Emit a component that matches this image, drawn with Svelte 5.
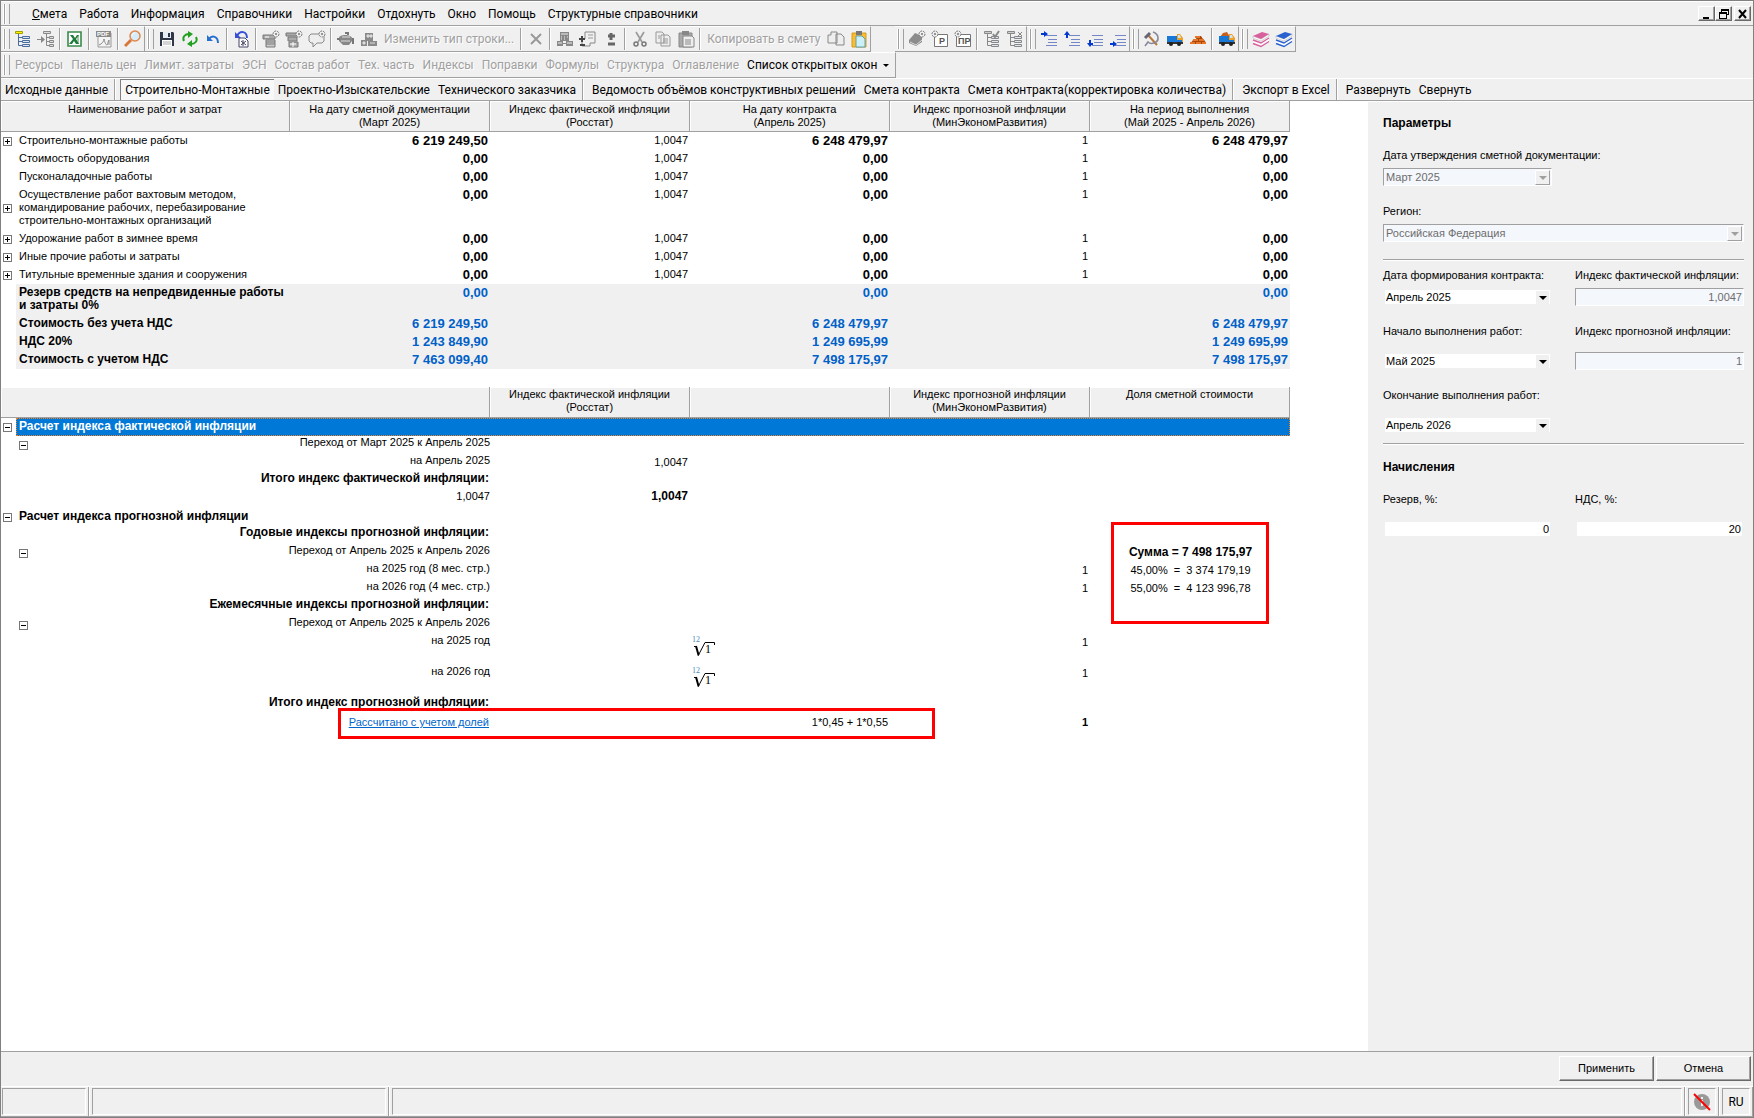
<script>
  const menu = ["Работа", "Информация", "Справочники", "Настройки", "Отдохнуть", "Окно", "Помощь", "Структурные справочники"];

  const toolbars = [
    ["tree", "treeIn", "|", "excel", "|", "pdf", "|", "search"],
    ["save", "refresh", "undo", "|", "restore", "|", "rowTop", "rowBottom", "comment", "|", "pot", "boxes", "Изменить тип строки...", "|",
      "cross", "|", "calc", "docPlus", "plusMinus", "|", "cut", "copy", "paste", "|", "Копировать в смету", "pages", "pasteColor"],
    ["book", "docP", "docPR", "|", "treeCheck", "treeCross"],
    ["lineIn", "lineUp", "lineDown", "lineOut"],
    ["hammer", "truck", "bricks", "|", "truckLoad"],
    ["bookPink", "bookBlue"]
  ];

  const panels = ["Ресурсы", "Панель цен", "Лимит. затраты", "ЭСН", "Состав работ", "Тех. часть", "Индексы", "Поправки", "Формулы", "Структура", "Оглавление"];

  const tabs = [
    ["Исходные данные"],
    ["Строительно-Монтажные", "Проектно-Изыскательские", "Технического заказчика"],
    ["Ведомость объёмов конструктивных решений", "Смета контракта", "Смета контракта(корректировка количества)"],
    ["Экспорт в Excel"],
    ["Развернуть", "Свернуть"]
  ];

  let active = "Строительно-Монтажные";

  const costs = [
    { name: "Строительно-монтажные работы", open: true, a: "6 219 249,50", i: "1,0047", b: "6 248 479,97", c: "6 248 479,97" },
    { name: "Стоимость оборудования", a: "0,00", i: "1,0047", b: "0,00", c: "0,00" },
    { name: "Пусконаладочные работы", a: "0,00", i: "1,0047", b: "0,00", c: "0,00" },
    { name: "Осуществление работ вахтовым методом,\nкомандирование рабочих, перебазирование\nстроительно-монтажных организаций", open: true, a: "0,00", i: "1,0047", b: "0,00", c: "0,00" },
    { name: "Удорожание работ в зимнее время", open: true, a: "0,00", i: "1,0047", b: "0,00", c: "0,00" },
    { name: "Иные прочие работы и затраты", open: true, a: "0,00", i: "1,0047", b: "0,00", c: "0,00" },
    { name: "Титульные временные здания и сооружения", open: true, a: "0,00", i: "1,0047", b: "0,00", c: "0,00" }
  ];

  const totals = [
    { name: "Резерв средств на непредвиденные работы\nи затраты 0%", a: "0,00", b: "0,00", c: "0,00" },
    { name: "Стоимость без учета НДС", a: "6 219 249,50", b: "6 248 479,97", c: "6 248 479,97" },
    { name: "НДС 20%", a: "1 243 849,90", b: "1 249 695,99", c: "1 249 695,99" },
    { name: "Стоимость с учетом НДС", a: "7 463 099,40", b: "7 498 175,97", c: "7 498 175,97" }
  ];

  const indexes = [
    { kind: "group selected", name: "Расчет индекса фактической инфляции" },
    { sub: true, name: "Переход от Март 2025 к Апрель 2025" },
    { name: "на Апрель 2025", fact: "1,0047" },
    { kind: "title", name: "Итого индекс фактической инфляции:" },
    { kind: "total", name: "1,0047", fact: "1,0047" },
    { kind: "group", name: "Расчет индекса прогнозной инфляции" },
    { kind: "title", name: "Годовые индексы прогнозной инфляции:" },
    { sub: true, name: "Переход от Апрель 2025 к Апрель 2026", share: "Сумма = 7 498 175,97", strong: true },
    { name: "на 2025 год (8 мес. стр.)", prog: "1", share: "45,00%  =  3 374 179,19" },
    { name: "на 2026 год (4 мес. стр.)", prog: "1", share: "55,00%  =  4 123 996,78" },
    { kind: "title", name: "Ежемесячные индексы прогнозной инфляции:" },
    { sub: true, name: "Переход от Апрель 2025 к Апрель 2026" },
    { kind: "tall", name: "на 2025 год", root: true, prog: "1" },
    { kind: "tall", name: "на 2026 год", root: true, prog: "1" },
    { kind: "title", name: "Итого индекс прогнозной инфляции:" },
    { kind: "result", link: "Рассчитано с учетом долей", formula: "1*0,45 + 1*0,55", prog: "1" }
  ];

  const tree = (c, y) => `<path d="M4.5 4v11.5H8M4.5 7.5H8M4.5 11.5H8" fill="none" stroke="${c}"/><path d="M8.5 6.5h7v2h-7zM8.5 10.5h7v2h-7zM8.5 14.5h7v2h-7z" fill="#dbe6f4" stroke="${c}"/><path d="M1.500 1.500h7v2h-7z" fill="${y}" stroke="#a0a000"/>`;
  const gear = `<circle cx="14" cy="4" r="3" fill="#eee" stroke="#777" stroke-dasharray="2 1"/><circle cx="14" cy="4" r="1" fill="#777"/>`;
  const lines = `<path d="M6 5.500h11M8 9.500h9M8 12.500h9M6 15.500h11" stroke="#7486c8" fill="none"/>`;
  const truck = `<path d="M1 6h10v2h6v5H1z" fill="#1878d8"/><path d="M11 4h3l3 4v2h-6z" fill="#f0a020"/><path d="M12 5h2l1 3h-3z" fill="#cfe4f8"/><path d="M1 12h16v2H1z" fill="#333"/><circle cx="5" cy="14" r="2" fill="#222"/><circle cx="13" cy="14" r="2" fill="#222"/><path d="M16 10h1v2h-1z" fill="#f0a020"/>`;
  const books = (c) => `<path d="M1 10v3l8 3 8-5V8l-8 5z" fill="#fff"/><path d="M1 13.500l8 3 8-5M1 10l8 3 8-5" fill="none" stroke="${c}" stroke-width="1.400"/><path d="M1 6v2l8 3 8-5V4L9 9z" fill="#fff" stroke="#aaa" stroke-width=".500"/><path d="M1 6l9-4 7 2-8 5z" fill="${c}"/>`;

  const icons = {
    tree: tree("#4a6d9c", "#fff000"),
    treeIn: `<path d="M9.500 4v11.500H12M9.500 7.500H12M9.500 11.500H12M0 9.500h6" fill="none" stroke="#888"/><path d="M4 6l4 3.500L4 13z" fill="#888"/><path d="M6.500 1.500h7v2h-7zM12.500 6.500h4v2h-4zM12.500 10.500h4v2h-4zM12.500 14.500h4v2h-4z" fill="#ddd" stroke="#888"/>`,
    excel: `<path d="M2 2h13v14H2z" fill="#fff" stroke="#3a8a4e" stroke-width="1.600"/><path d="M12 5v9" stroke="#9fcaa8" stroke-width="2"/><path d="M4 5h3l2 3 2-3h2l-3 4 3 5h-3l-2-3-2 3H3l4-5z" fill="#1e7a3a"/>`,
    pdf: `<path d="M3 3h13v14H3z" fill="#f4f4f4" stroke="#999"/><path d="M1 1h15v6H1z" fill="#8a8a8a"/><text x="2" y="6" font-size="6" font-weight="bold" font-family="Liberation Sans" fill="#fff">PDF</text><path d="M4 15c3-1 5-4 5-6 1 4 2 6 3 6s1-5 2-5v5" fill="none" stroke="#888"/>`,
    search: `<path d="M1 16l6-6" stroke="#d8763a" stroke-width="3"/><circle cx="11" cy="6" r="5" fill="#d5ecfa" stroke="#e0874c" stroke-width="1.500"/><path d="M8 6c0-2 2-3 3-3" stroke="#fff" fill="none"/>`,
    save: `<path d="M2 2h13l1 1v13H2z" fill="#303848"/><path d="M5 2h8v6H5z" fill="#e8eef5"/><path d="M10 3h2v4h-2z" fill="#303848"/><path d="M4 10h10v6H4z" fill="#fff"/><path d="M5 12h8M5 14h8" stroke="#aaa"/>`,
    refresh: `<path d="M3 11c-2-4 1-7 5-7M15 7c2 4-1 7-5 7" fill="none" stroke="#22a022" stroke-width="2"/><path d="M7 1l5 3-5 4zM11 10v7l-5-3z" fill="#22a022"/>`,
    undo: `<path d="M5 9c3-4 9-3 9 4" fill="none" stroke="#2870d0" stroke-width="2"/><path d="M3 5v6h6z" fill="#2870d0"/>`,
    restore: `<path d="M4 6c3-6 10-5 10 2" fill="none" stroke="#3850d8" stroke-width="2"/><path d="M2 2v6h6z" fill="#3850d8"/><path d="M6 8h6l3 3v6H6z" fill="#fff" stroke="#446"/><path d="M8 11l5 4M13 11l-5 4M10 10v6" stroke="#446"/>`,
    rowTop: `<path d="M1 5h12v4H1z" fill="#aaa" stroke="#777"/><path d="M4 10h9v7H4zM4 12h9M4 14h9" fill="#ccc" stroke="#777"/><path d="M3 7h4" stroke="#fff"/>${gear}`,
    rowBottom: `<path d="M1 3h11v3H1zM3 7h9v4H3zM4 12h9v5H4z" fill="#aaa" stroke="#777"/><path d="M5 14h6M8 12v5" stroke="#fff"/>${gear}`,
    comment: `<path d="M3 4h11l2 2v5l-2 2H9l-4 4v-4H3l-2-2V6z" fill="#eee" stroke="#888"/>${gear}`,
    pot: `<path d="M2 8c0-4 12-4 13 0v3l-3 4H6l-4-4z" fill="#888"/><path d="M5 7h8M4 11h9" stroke="#ddd"/><path d="M8 3h3v2M16 8v6M0 9h3" stroke="#777" fill="none" stroke-width="2"/>`,
    boxes: `<path d="M5 3h8v8H5zM1 10h6v6H1zM8 11h9v5H8z" fill="#8a8a8a"/><path d="M7 5h2v2H7zM10 5h2v2h-2zM3 12h2v2H3zM10 13h5" fill="#ddd" stroke="#ddd"/>`,
    cross: `<path d="M4 4l10 10M14 4L4 14" stroke="#999" stroke-width="2"/>`,
    calc: `<path d="M4 2h9v9H4zM1 11h6v5H1zM10 11h7v5h-7z" fill="#888"/><path d="M5 4h7M5 7h1M8 7h1M11 7h1M2 13h4M11 13h5M5 9h1M8 9h1" stroke="#eee"/><path d="M7 13.500h3" stroke="#888"/>`,
    docPlus: `<path d="M6 2h10v11h-5v3H3V9h3z" fill="#f0f0f0" stroke="#888"/><path d="M9 5h5M9 8h5" stroke="#999"/><path d="M0 9h6M3 6v6M1 15h5" stroke="#444" stroke-width="2"/>`,
    plusMinus: `<path d="M9 3v7M6 6h7M6 14h7" stroke="#666" stroke-width="3"/>`,
    cut: `<path d="M5 2l6 10M13 2L7 12" stroke="#999" stroke-width="1.600"/><circle cx="5" cy="14" r="2" fill="none" stroke="#777" stroke-width="1.500"/><circle cx="13" cy="14" r="2" fill="none" stroke="#777" stroke-width="1.500"/>`,
    copy: `<path d="M2 2h6l2 2v9H2zM7 5h7l2 2v9H7z" fill="#eee" stroke="#999"/><path d="M9 9h5M9 11h5M9 13h5M4 6h2M4 8h2" stroke="#999"/>`,
    paste: `<path d="M2 3h13v14H2z" fill="#aaa" stroke="#888"/><path d="M5 1h7v4H5z" fill="#888"/><path d="M6 6h9l2 2v9H6z" fill="#eee" stroke="#888"/><path d="M8 10h6M8 12h6M8 14h6" stroke="#888"/>`,
    pages: `<path d="M1 5h3V2h6v11H1zM9 4h5l3 3v8H9z" fill="#eee" stroke="#888"/>`,
    pasteColor: `<path d="M2 3h14v14H2z" fill="#fdbb30" stroke="#d89a20"/><path d="M6 1h6v4H6z" fill="#777"/><path d="M6 6h6l3 3v8H6z" fill="#cdf0f8" stroke="#5aa0b0"/>`,
    book: `<path d="M1 10l6-7 7 3v6l-6 4-7-3z" fill="#8c8c8c"/><path d="M2 12l6 3 6-5" stroke="#ddd" fill="none"/>${gear}`,
    docP: `<path d="M3.500 4.500h13v12h-13z" fill="#fff" stroke="#777"/><text x="8" y="14" font-size="9" font-weight="bold" font-family="Liberation Sans" fill="#555">Р</text><g transform="translate(-10 0)">${gear}</g>`,
    docPR: `<path d="M2.500 4.500h14v12h-14z" fill="#fff" stroke="#777"/><text x="4" y="14" font-size="9" font-weight="bold" font-family="Liberation Sans" fill="#555">ПР</text><g transform="translate(-10 0)">${gear}</g>`,
    treeCheck: `${tree("#888", "#ccc").replace("#a0a000", "#888")}<path d="M10 4l2 3 4-6" fill="none" stroke="#888" stroke-width="2"/>`,
    treeCross: `${tree("#888", "#ccc").replace("#a0a000", "#888")}<path d="M12 2l4 4M16 2l-4 4" fill="none" stroke="#888"/>`,
    lineIn: `${lines}<path d="M1 4h4" stroke="#0038d0" stroke-width="2"/><path d="M4 1l4 3-4 3z" fill="#0038d0"/>`,
    lineUp: `${lines}<path d="M4 3v5" stroke="#0038d0" stroke-width="2"/><path d="M1 5l3-4 3 4z" fill="#0038d0"/>`,
    lineDown: `${lines}<path d="M4 10v4h3" stroke="#0038d0" fill="none" stroke-width="2"/><path d="M1 13l3 4 3-4z" fill="#0038d0"/>`,
    lineOut: `${lines}<path d="M1 14h4" stroke="#0038d0" stroke-width="2"/><path d="M4 11l4 3-4 3z" fill="#0038d0"/>`,
    hammer: `<path d="M5 5l9 10" stroke="#b87838" stroke-width="2"/><path d="M2 8l5-5" stroke="#667" stroke-width="3"/><path d="M10 2c6 2 7 9 1 11-3 1-5 0-6-1l-3 4" fill="none" stroke="#889" stroke-width="1.600"/>`,
    truck,
    bricks: `<path d="M1 14l3-4 3-1 1-3h4l2 3 2 2 1 3z" fill="#a84808"/><path d="M6 6h5v2H6zM4 9h5v2H4zM10 9h5v2h-5zM1 12h5v2H1zM7 12h5v2H7zM13 12h4v2h-4z" fill="#e8762a"/>`,
    truckLoad: `<path d="M2 7l3-4 4-1 3 5z" fill="#c86020"/>${truck}`,
    bookPink: books("#d8609c"),
    bookBlue: books("#2a62d0")
  };
</script>

{#snippet toggle(open)}
  <button class="toggle" aria-label={open ? "Развернуть строку" : "Свернуть строку"}>
    <svg width="9" height="9" viewBox="0 0 9 9"><path d="M2 4.5h5" /> {#if open}<path d="M4.5 2v5" />{/if}</svg>
  </button>
{/snippet}

{#snippet drop()}
  <span class="drop"><i class="arrow"></i></span>
{/snippet}

<div class="window">
  <header>
    <nav class="menu">
      <span class="grip"></span>
      <button class="first"><u>С</u>мета</button>
      {#each menu as item}
        <button>{item}</button>
      {/each}
      <div class="mdi">
        <button aria-label="Свернуть окно"><svg width="12" height="12" viewBox="0 0 12 12"><path d="M2 9h6v2H2z" /></svg></button>
        <button aria-label="Восстановить окно"><svg width="12" height="12" viewBox="0 0 12 12"><path d="M3 1h8v6H9V6h1V3H4v1H3zM1 4h8v7H1zM2 6v4h6V6z" fill-rule="evenodd" /></svg></button>
        <button class="close" aria-label="Закрыть окно"><svg width="12" height="12" viewBox="0 0 12 12"><path d="M2 2l7 8M9 2l-7 8" stroke="#000" stroke-width="2" /></svg></button>
      </div>
    </nav>

    <div class="toolbars">
      {#each toolbars as bar}
        <div class="bar">
          <span class="grip"></span>
          {#each bar as item}
            {#if item === "|"}
              <span class="sep"></span>
            {:else if icons[item]}
              <button class="icon" aria-label={item}><svg width="18" height="18" viewBox="0 0 18 18">{@html icons[item]}</svg></button>
            {:else}
              <button class="off" disabled>{item}</button>
            {/if}
          {/each}
        </div>
      {/each}
    </div>

    <div class="panels">
      <div class="bar">
        <span class="grip"></span>
        {#each panels as item}
          <button class="off" disabled>{item}</button>
        {/each}
        <button class="windows">Список открытых окон <i class="arrow"></i></button>
      </div>
    </div>

    <div class="tabs">
      {#each tabs as group}
        <div class="tabgroup">
          {#each group as tab}
            <button class:active={tab === active} on:click={() => (active = tab)}>{tab}</button>
          {/each}
        </div>
      {/each}
    </div>
  </header>

  <main>
    <section class="sheet">
      <table class="costs">
        <colgroup><col class="c-toggle" /><col class="c-name" /><col span="5" class="c-value" /></colgroup>
        <thead>
          <tr>
            <th colspan="2">Наименование работ и затрат</th>
            <th>На дату сметной документации<br />(Март 2025)</th>
            <th>Индекс фактической инфляции<br />(Росстат)</th>
            <th>На дату контракта<br />(Апрель 2025)</th>
            <th>Индекс прогнозной инфляции<br />(МинЭкономРазвития)</th>
            <th>На период выполнения<br />(Май 2025 - Апрель 2026)</th>
          </tr>
        </thead>
        <tbody>
          {#each costs as row}
            <tr>
              <td class="tg">{#if row.open}{@render toggle(true)}{/if}</td>
              <td class="name">{row.name}</td>
              <td class="money">{row.a}</td>
              <td>{row.i}</td>
              <td class="money">{row.b}</td>
              <td>1</td>
              <td class="money">{row.c}</td>
            </tr>
          {/each}
          {#each totals as row}
            <tr class="sum">
              <td class="tg"></td>
              <td class="name">{row.name}</td>
              <td class="money">{row.a}</td>
              <td></td>
              <td class="money">{row.b}</td>
              <td></td>
              <td class="money">{row.c}</td>
            </tr>
          {/each}
        </tbody>
      </table>

      <table class="indexes">
        <colgroup><col class="c-toggle" /><col class="c-wide" /><col span="4" class="c-value" /></colgroup>
        <thead>
          <tr>
            <th colspan="2"></th>
            <th>Индекс фактической инфляции<br />(Росстат)</th>
            <th></th>
            <th>Индекс прогнозной инфляции<br />(МинЭкономРазвития)</th>
            <th>Доля сметной стоимости</th>
          </tr>
        </thead>
        <tbody>
          {#each indexes as row}
            {#if row.kind && row.kind.startsWith("group")}
              <tr class={row.kind}>
                <td class="tg">{@render toggle(false)}</td>
                <td class="name" colspan="5">{row.name}</td>
              </tr>
            {:else}
              <tr class={row.kind}>
                <td class="tg"></td>
                <td class="step">
                  <div>
                    {#if row.sub}{@render toggle(false)}{/if}
                    {#if row.link}<a href="#shares">{row.link}</a>{:else}<span>{row.name}</span>{/if}
                  </div>
                </td>
                <td class="fact">{row.fact ?? ""}</td>
                <td>
                  {#if row.root}
                    <div class="root"><sup>12</sup><svg width="22" height="22" viewBox="0 0 22 22"><path d="M1 10.5h3M5 20l7-13.5h9.5V9" fill="none" stroke="#000" /><path d="M3 10l2.5 9" stroke="#000" stroke-width="2" /></svg><b>1</b></div>
                  {:else}
                    {row.formula ?? ""}
                  {/if}
                </td>
                <td class="prog">{row.prog ?? ""}</td>
                <td class="share" class:strong={row.strong}>{row.share ?? ""}</td>
              </tr>
            {/if}
          {/each}
        </tbody>
      </table>
      <div class="mark shares"></div>
      <div class="mark result-mark"></div>
    </section>

    <aside>
      <h2>Параметры</h2>
      <div class="fields">
        <div class="field">
          <label for="approved">Дата утверждения сметной документации:</label>
          <div class="combo disabled half"><select id="approved" disabled><option>Март 2025</option></select>{@render drop()}</div>
        </div>
        <div class="field">
          <label for="region">Регион:</label>
          <div class="combo disabled"><select id="region" disabled><option>Российская Федерация</option></select>{@render drop()}</div>
        </div>
      </div>
      <hr />
      <div class="fields pair">
        <div class="field">
          <label for="contract">Дата формирования контракта:</label>
          <div class="combo"><select id="contract"><option>Апрель 2025</option></select>{@render drop()}</div>
        </div>
        <div class="field">
          <label for="factIndex">Индекс фактической инфляции:</label>
          <input id="factIndex" disabled value="1,0047" />
        </div>
        <div class="field low">
          <label for="start">Начало выполнения работ:</label>
          <div class="combo"><select id="start"><option>Май 2025</option></select>{@render drop()}</div>
        </div>
        <div class="field low">
          <label for="progIndex">Индекс прогнозной инфляции:</label>
          <input id="progIndex" disabled value="1" />
        </div>
        <div class="field low">
          <label for="finish">Окончание выполнения работ:</label>
          <div class="combo"><select id="finish"><option>Апрель 2026</option></select>{@render drop()}</div>
        </div>
      </div>
      <hr />
      <h2>Начисления</h2>
      <div class="fields pair">
        <div class="field low">
          <label for="reserve">Резерв, %:</label>
          <input id="reserve" value="0" />
        </div>
        <div class="field low">
          <label for="vat">НДС, %:</label>
          <input id="vat" value="20" />
        </div>
      </div>
    </aside>
  </main>

  <div class="actions">
    <button>Применить</button>
    <button>Отмена</button>
  </div>

  <footer>
    <div class="cell s1"><span></span></div>
    <div class="cell s2"><span></span></div>
    <div class="cell s3"><span></span></div>
    <div class="cell s4">
      <span><svg width="18" height="18" viewBox="0 0 18 18"><circle cx="9" cy="9" r="8" fill="#999" /><path d="M8 4h2v2H8zM7 7h3v6H8V8H7z" fill="#eee" /><path d="M1 1l16 16" stroke="#f00" stroke-width="2" /></svg></span>
    </div>
    <div class="cell s4"><span>RU</span></div>
  </footer>
</div>

<style>
  :global(body) {
    background: #f0f0f0;
  }
  .window {
    box-sizing: border-box;
    min-height: 100vh;
    display: flex;
    flex-direction: column;
    border: 1px solid #808080;
    background: #f0f0f0;
    color: #000;
    font: 11px/13px "Liberation Sans", Arial, sans-serif;
  }
  button, select, input {
    font: inherit;
    color: inherit;
    margin: 0;
    padding: 0;
    border: 0;
    border-radius: 0;
    background: none;
  }
  button {
    white-space: nowrap;
  }
  header {
    font: 12px/16px Roboto, "Segoe UI", sans-serif;
  }

  /* menu and toolbars */
  .grip {
    width: 4px;
    height: 20px;
    margin: 0 1px 0 3px;
    border: solid #a0a0a0;
    border-width: 0 1px;
    box-shadow: inset 1px 0 #fff, -1px 0 #fff;
    flex: none;
  }
  .menu {
    display: flex;
    align-items: center;
    height: 23px;
    border-top: 1px solid #fff;
    border-bottom: 1px solid #a0a0a0;
  }
  .menu > button {
    padding: 0 6px;
  }
  .menu > .first {
    margin-left: 15px;
  }
  .mdi {
    display: flex;
    margin-left: auto;
    padding-right: 2px;
  }
  .mdi button {
    width: 17px;
    height: 15px;
    border: 1px solid;
    border-color: #fff #696969 #696969 #fff;
    box-shadow: inset -1px -1px #a0a0a0;
    line-height: 0;
  }
  .mdi .close {
    margin-left: 2px;
  }
  .toolbars {
    display: flex;
  }
  .bar {
    display: flex;
    align-items: center;
    height: 24px;
    border: solid #a0a0a0;
    border-width: 0 1px 1px 0;
    border-top: 1px solid #fff;
  }
  .bar:nth-child(3) {
    margin-left: 24px;
  }
  .icon {
    width: 23px;
    height: 22px;
    line-height: 0;
  }
  .sep {
    width: 1px;
    height: 22px;
    margin: 0 2px;
    background: #a0a0a0;
    border-right: 1px solid #fff;
  }
  .off {
    padding: 0 4px;
    color: #a0a0a0;
    text-shadow: 1px 1px #fff;
  }
  .panels {
    display: flex;
  }
  .windows {
    display: flex;
    align-items: center;
    gap: 6px;
    padding: 0 6px 0 4px;
  }
  .arrow {
    border: solid transparent;
    border-width: 4px 4px 0;
    border-top-color: #000;
  }
  .windows .arrow {
    border-width: 3px 3px 0;
  }
  .tabs {
    display: flex;
    height: 21px;
    border-top: 1px solid #fff;
    border-bottom: 1px solid #a0a0a0;
  }
  .tabgroup {
    display: flex;
    padding: 0 2px 0 5px;
    border-right: 1px solid #a0a0a0;
    box-shadow: 1px 0 #fff;
  }
  .tabgroup:first-child {
    padding-left: 0;
  }
  .tabgroup:last-child {
    border: 0;
    box-shadow: none;
  }
  .tabgroup button {
    padding: 0 4px;
  }
  .tabgroup .active {
    border-left: 1px solid #808080;
    border-top: 1px solid #808080;
    background: #f8f8f8;
  }

  main {
    flex: 1;
    display: flex;
    border-bottom: 1px solid #a0a0a0;
  }
  .sheet {
    flex: 1;
    position: relative;
    background: #fff;
  }
  table {
    table-layout: fixed;
    width: 1289px;
    border-collapse: separate;
    border-spacing: 0;
  }
  .c-toggle {
    width: 15px;
  }
  .c-name {
    width: 274px;
  }
  .c-wide {
    width: 474px;
  }
  .c-value {
    width: 200px;
  }
  th {
    height: 26px;
    padding: 2px 0;
    border-right: 1px solid #a0a0a0;
    border-bottom: 1px solid #a0a0a0;
    box-shadow: inset 1px 1px #fff;
    background: #f0f0f0;
    font-weight: normal;
    vertical-align: top;
  }
  .indexes th {
    padding: 1px 0 3px;
  }
  td {
    padding: 2px 2px 3px 3px;
    text-align: right;
    vertical-align: top;
    white-space: pre-line;
  }
  .tg {
    padding: 0 0 0 2px;
    text-align: left;
    vertical-align: middle;
    line-height: 0;
  }
  .toggle {
    width: 9px;
    height: 9px;
    outline: 1px solid #777;
    outline-offset: -1px;
    background: #fff;
    line-height: 0;
    flex: none;
  }
  .toggle path {
    stroke: #000;
    fill: none;
  }
  .name {
    text-align: left;
  }
  .money {
    font-size: 13px;
    font-weight: bold;
  }
  .sum td:not(.tg) {
    background: #f0f0f0;
    font-weight: bold;
  }
  .sum .money {
    color: #0060c8;
  }
  .sum .name, .group .name, .title .step {
    font-size: 12px;
    font-weight: bold;
  }

  .indexes {
    margin-top: 18px;
  }
  .selected .name {
    background: #0078d7;
    color: #fff;
    outline: 1px dotted #f08020;
    outline-offset: -1px;
  }
  .step {
    padding: 0 0 0 3px;
  }
  .title .step {
    padding-right: 1px;
  }
  .step div {
    display: flex;
    justify-content: flex-end;
    height: 18px;
  }
  .step .toggle {
    margin: 5px auto 0 0;
  }
  .tall .step div {
    height: 31px;
  }
  .result .step div {
    box-sizing: border-box;
    padding: 2px 1px 0 0;
  }
  .result .prog {
    font-weight: bold;
  }
  .total .fact {
    padding-top: 0;
    font-size: 12px;
    font-weight: bold;
  }
  a {
    color: #0066cc;
  }
  .share {
    text-align: center;
    white-space: pre;
  }
  .strong {
    font-weight: bold;
    font-size: 12px;
  }
  .root {
    position: relative;
    height: 22px;
    text-align: left;
    line-height: 0;
    font-family: "Liberation Serif", serif;
  }
  .root sup {
    position: absolute;
    left: -1px;
    top: 0;
    font-size: 8px;
    line-height: 8px;
    color: #4a86b8;
  }
  .root b {
    position: absolute;
    left: 12px;
    top: 7px;
    font-weight: normal;
    font-size: 12px;
    line-height: 13px;
  }
  .mark {
    position: absolute;
    box-sizing: border-box;
    border: 3px solid #f00;
  }
  .shares {
    left: 1110px;
    top: 421px;
    width: 158px;
    height: 102px;
  }
  .result-mark {
    left: 337px;
    top: 607px;
    width: 597px;
    height: 31px;
  }

  aside {
    box-sizing: border-box;
    width: 385px;
    padding: 0 9px 0 15px;
    border-top: 1px solid #fff;
  }
  h2 {
    margin: 15px 0 19px;
    font-size: 12px;
    line-height: 13px;
  }
  .fields {
    display: grid;
    row-gap: 19px;
  }
  .pair {
    grid-template-columns: 169px 169px;
    column-gap: 23px;
  }
  .field {
    display: flex;
    flex-direction: column;
    gap: 6px;
  }
  .low {
    gap: 14px;
  }
  .combo {
    display: flex;
    box-sizing: border-box;
    height: 18px;
    border: 2px solid #f0f0f0;
    background: #fff;
  }
  .combo select {
    flex: 1;
    appearance: none;
    padding-left: 1px;
    opacity: 1;
  }
  .drop {
    display: flex;
    align-items: center;
    justify-content: center;
    width: 13px;
    margin: 1px 1px 0 0;
    background: #f0f0f0;
  }
  .half {
    width: 169px;
  }
  .disabled, input:disabled {
    border: 1px solid;
    border-color: #a0a0a0 #fff #fff #a0a0a0;
    background: #f4f7fc;
    color: #6d6d6d;
  }
  .disabled select {
    padding-left: 2px;
  }
  .disabled .drop {
    border: 1px solid;
    border-color: #fff #a0a0a0 #a0a0a0 #fff;
  }
  .disabled .arrow {
    border-top-color: #a0a0a0;
  }
  hr {
    margin: 17px 0 8px;
    border: 0;
    border-top: 1px solid #a0a0a0;
    border-bottom: 1px solid #fff;
  }
  .pair + hr {
    margin: 9px 0 16px;
  }
  input {
    box-sizing: border-box;
    width: 169px;
    height: 18px;
    padding: 0 1px;
    border: 2px solid #f0f0f0;
    background: #fff;
    text-align: right;
  }

  .actions {
    display: flex;
    justify-content: flex-end;
    gap: 2px;
    padding: 4px 2px 5px 0;
  }
  .actions button {
    width: 95px;
    height: 25px;
    border: 1px solid;
    border-color: #fff #696969 #696969 #fff;
    box-shadow: inset -1px -1px #a0a0a0;
  }
  footer {
    display: flex;
    height: 29px;
    border-top: 1px solid #fff;
    border-bottom: 1px solid #a0a0a0;
    font: 12px/16px Roboto, sans-serif;
  }
  .cell {
    box-sizing: border-box;
    padding: 1px 2px 1px 1px;
    border-right: 1px solid #a0a0a0;
    display: flex;
  }
  .cell + .cell {
    padding-left: 2px;
    border-left: 1px solid #fff;
  }
  .cell span {
    flex: 1;
    display: flex;
    align-items: center;
    justify-content: center;
    border: 1px solid;
    border-color: #a0a0a0 #fff #fff #a0a0a0;
  }
  .s1 {
    width: 88px;
  }
  .s2 {
    width: 300px;
  }
  .s3 {
    flex: 1;
  }
  .s4 {
    width: 34px;
  }
</style>
